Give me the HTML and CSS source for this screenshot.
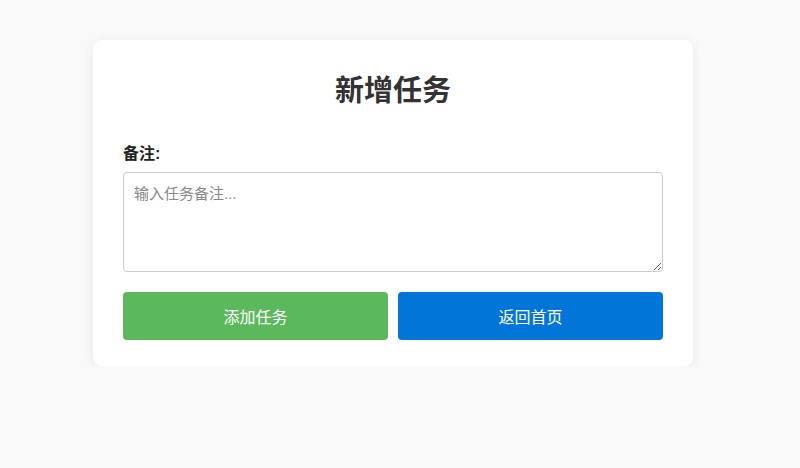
FILE: index.html
```html
<!DOCTYPE html>
<html lang="zh-CN">
<head>
<meta charset="utf-8">
<title>新增任务</title>
<link rel="stylesheet" href="styles.css">
</head>
<body>
<div class="page">
  <form class="card">
    <h1 class="title">新增任务</h1>
    <label class="label" for="note">备注:</label>
    <textarea id="note" class="note" placeholder="输入任务备注..."></textarea>
    <div class="actions">
      <button type="button" class="btn btn-add">添加任务</button>
      <button type="button" class="btn btn-back">返回首页</button>
    </div>
  </form>
</div>
</body>
</html>
```
FILE: styles.css
```css
html, body {
  margin: 0;
  padding: 0;
  background: #f9f9f9;
  font-family: "Liberation Sans", "Noto Sans CJK SC", sans-serif;
  color: #333;
}
.page {
  padding: 40px 14px 0 0;
}
.card {
  box-sizing: border-box;
  width: 600px;
  margin: 0 auto;
  background: #fff;
  border-radius: 8px;
  box-shadow: 0 2px 10px rgba(0, 0, 0, 0.08);
  padding: 30px 30px 26px;
  display: flex;
  flex-direction: column;
}
.title {
  margin: 5px 0 36px;
  font-size: 29px;
  line-height: 32px;
  font-weight: bold;
  text-align: center;
  color: #333;
}
.label {
  font-size: 16px;
  line-height: 22px;
  font-weight: bold;
  color: #222;
  margin-bottom: 7px;
}
.note {
  box-sizing: border-box;
  width: 100%;
  height: 100px;
  padding: 10px;
  border: 1px solid #ccc;
  border-radius: 4px;
  font-family: "Liberation Sans", "Noto Sans CJK SC", sans-serif;
  font-size: 15px;
  line-height: 22px;
  color: #333;
  resize: vertical;
  margin: 0;
}
.note::placeholder {
  color: #888;
}
.actions {
  display: flex;
  gap: 10px;
  margin-top: 20px;
}
.btn {
  flex: 1;
  height: 48px;
  border: none;
  border-radius: 4px;
  color: #fff;
  font-family: "Liberation Sans", "Noto Sans CJK SC", sans-serif;
  font-size: 16px;
  cursor: pointer;
}
.btn-add {
  background: #5cb85c;
}
.btn-back {
  background: #0275d8;
}
```
